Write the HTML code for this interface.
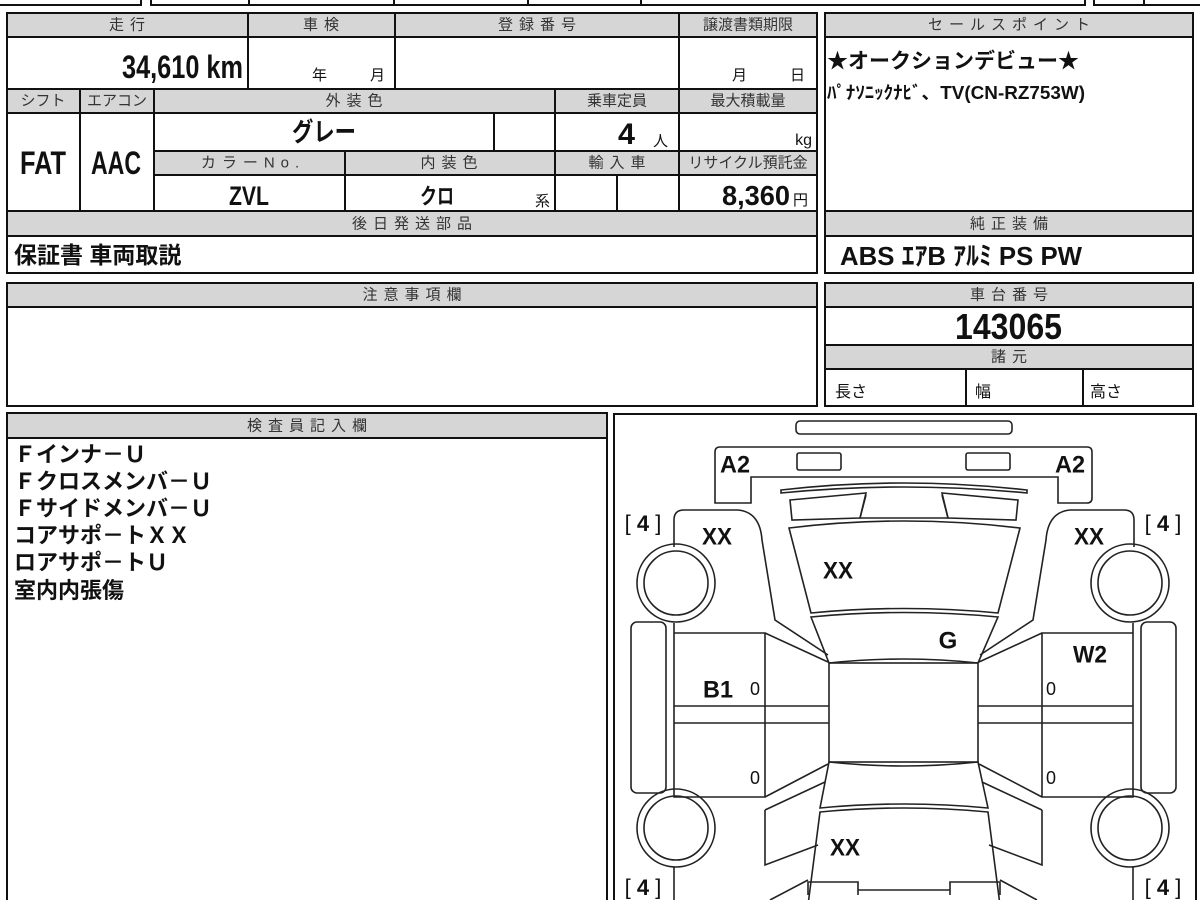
<!DOCTYPE html>
<html><head><meta charset="utf-8"><style>
html,body{margin:0;padding:0;background:#fff;width:1200px;height:900px;overflow:hidden}
svg{display:block}
text{font-family:"Liberation Sans","Noto Sans CJK JP",sans-serif;fill:#111}
.h{font-size:15px;fill:#333;text-anchor:middle;dominant-baseline:central;letter-spacing:6px}
.hs{font-size:15px;fill:#333;text-anchor:middle;dominant-baseline:central}
.bd{font-weight:bold}
.c{text-anchor:middle;dominant-baseline:central}
</style></head><body>
<svg width="1200" height="900" viewBox="0 0 1200 900" xmlns="http://www.w3.org/2000/svg">
<g fill="none" stroke="#111" stroke-width="2">
<rect x="-2" y="-10" width="143" height="15"/>
<rect x="151" y="-10" width="934" height="15"/>
<line x1="249" y1="-2" x2="249" y2="5"/><line x1="394" y1="-2" x2="394" y2="5"/><line x1="528" y1="-2" x2="528" y2="5"/><line x1="641" y1="-2" x2="641" y2="5"/>
<rect x="1094" y="-10" width="110" height="15"/><line x1="1144" y1="-2" x2="1144" y2="5"/>
</g>
<g fill="#d6d6d6">
<rect x="7" y="13" width="810" height="24"/>
<rect x="7" y="89" width="810" height="24"/>
<rect x="154" y="151" width="663" height="24"/>
<rect x="7" y="211" width="810" height="25"/>
<rect x="825" y="13" width="368" height="24"/>
<rect x="825" y="211" width="368" height="25"/>
<rect x="7" y="283" width="810" height="24"/>
<rect x="825" y="283" width="368" height="24"/>
<rect x="825" y="345" width="368" height="24"/>
<rect x="7" y="413" width="600" height="25"/>
</g>
<g fill="none" stroke="#111" stroke-width="2">
<rect x="7" y="13" width="810" height="260"/>
<line x1="7" y1="37" x2="817" y2="37"/><line x1="7" y1="89" x2="817" y2="89"/><line x1="7" y1="113" x2="817" y2="113"/>
<line x1="154" y1="151" x2="817" y2="151"/><line x1="154" y1="175" x2="817" y2="175"/>
<line x1="7" y1="211" x2="817" y2="211"/><line x1="7" y1="236" x2="817" y2="236"/>
<line x1="248" y1="13" x2="248" y2="89"/><line x1="395" y1="13" x2="395" y2="89"/><line x1="679" y1="13" x2="679" y2="89"/>
<line x1="80" y1="89" x2="80" y2="211"/><line x1="154" y1="89" x2="154" y2="211"/><line x1="555" y1="89" x2="555" y2="211"/><line x1="679" y1="89" x2="679" y2="211"/>
<line x1="494" y1="113" x2="494" y2="151"/><line x1="345" y1="151" x2="345" y2="211"/><line x1="617" y1="175" x2="617" y2="211"/>
<rect x="825" y="13" width="368" height="260"/>
<line x1="825" y1="37" x2="1193" y2="37"/><line x1="825" y1="211" x2="1193" y2="211"/><line x1="825" y1="236" x2="1193" y2="236"/>
<rect x="7" y="283" width="810" height="123"/><line x1="7" y1="307" x2="817" y2="307"/>
<rect x="825" y="283" width="368" height="123"/>
<line x1="825" y1="307" x2="1193" y2="307"/><line x1="825" y1="345" x2="1193" y2="345"/><line x1="825" y1="369" x2="1193" y2="369"/>
<line x1="966" y1="369" x2="966" y2="406"/><line x1="1083" y1="369" x2="1083" y2="406"/>
<rect x="7" y="413" width="600" height="500"/><line x1="7" y1="438" x2="607" y2="438"/>
<rect x="614" y="414" width="582" height="500"/>
</g>
<text class="h" x="130" y="25">走行</text>
<text class="h" x="324" y="25">車検</text>
<text class="h" x="540" y="25">登録番号</text>
<text class="hs" x="748" y="25">譲渡書類期限</text>
<text class="bd" x="122" y="78" font-size="32" textLength="121" lengthAdjust="spacingAndGlyphs">34,610 km</text>
<text x="312" y="80" font-size="15">年</text><text x="370" y="80" font-size="15">月</text>
<text x="732" y="80" font-size="15">月</text><text x="790" y="80" font-size="15">日</text>
<text class="hs" x="43" y="101">シフト</text>
<text class="hs" x="117" y="101">エアコン</text>
<text class="h" x="357" y="101">外装色</text>
<text class="hs" x="617" y="101">乗車定員</text>
<text class="hs" x="748" y="101">最大積載量</text>
<text class="bd" x="20" y="174" font-size="32" textLength="46" lengthAdjust="spacingAndGlyphs">FAT</text>
<text class="bd" x="91" y="174" font-size="32" textLength="50" lengthAdjust="spacingAndGlyphs">AAC</text>
<text class="bd" x="292" y="141" font-size="26" textLength="64" lengthAdjust="spacingAndGlyphs">グレー</text>
<text class="bd" x="618" y="144" font-size="30" textLength="17" lengthAdjust="spacingAndGlyphs">4</text>
<text x="653" y="146" font-size="15">人</text>
<text x="812" y="145" font-size="16" text-anchor="end">kg</text>
<text class="h" x="253" y="163" letter-spacing="9">カラーNo.</text>
<text class="h" x="452" y="163">内装色</text>
<text class="h" x="620" y="163">輸入車</text>
<text class="hs" x="748" y="163">リサイクル預託金</text>
<text class="bd" x="229" y="205" font-size="27" textLength="40" lengthAdjust="spacingAndGlyphs">ZVL</text>
<text class="bd" x="420" y="204" font-size="22" textLength="34" lengthAdjust="spacingAndGlyphs">クロ</text>
<text x="535" y="206" font-size="15">系</text>
<text class="bd" x="722" y="205" font-size="28" textLength="68" lengthAdjust="spacingAndGlyphs">8,360</text>
<text x="793" y="205" font-size="15">円</text>
<text class="h" x="415" y="224" letter-spacing="9">後日発送部品</text>
<text class="bd" x="14" y="263" font-size="23">保証書 車両取説</text>
<text class="h" x="1012" y="25" letter-spacing="12">セールスポイント</text>
<text class="bd" x="827" y="68" font-size="21">★オークションデビュー★</text>
<text class="bd" x="827" y="99" font-size="18" textLength="258" lengthAdjust="spacingAndGlyphs">ﾊﾟﾅｿﾆｯｸﾅﾋﾞ、TV(CN-RZ753W)</text>
<text class="h" x="1012" y="224" letter-spacing="9">純正装備</text>
<text class="bd" x="840" y="265" font-size="26" textLength="242" lengthAdjust="spacingAndGlyphs">ABS ｴｱB ｱﾙﾐ PS PW</text>
<text class="h" x="415" y="295" letter-spacing="12">注意事項欄</text>
<text class="h" x="1012" y="295" letter-spacing="9">車台番号</text>
<text class="bd" x="955" y="339" font-size="36" textLength="107" lengthAdjust="spacingAndGlyphs">143065</text>
<text class="h" x="1012" y="357" letter-spacing="8">諸元</text>
<text x="835" y="397" font-size="16">長さ</text><text x="975" y="397" font-size="16">幅</text><text x="1090" y="397" font-size="16">高さ</text>
<text class="h" x="310" y="426" letter-spacing="8">検査員記入欄</text>
<g font-size="22" font-weight="bold">
<text x="14" y="462">Ｆインナ－Ｕ</text>
<text x="14" y="489">Ｆクロスメンバ－Ｕ</text>
<text x="14" y="516">Ｆサイドメンバ－Ｕ</text>
<text x="14" y="543">コアサポ－トＸＸ</text>
<text x="14" y="570">ロアサポ－トＵ</text>
<text x="14" y="598">室内内張傷</text>
</g>
<g fill="none" stroke="#222" stroke-width="1.6">
<rect x="796" y="421" width="216" height="13" rx="4"/>
<path d="M715,503 L715,452 Q715,447 720,447 L1087,447 Q1092,447 1092,452 L1092,498 Q1092,503 1087,503 L1058,503 L1058,477 L751,477 L751,503 Z"/>
<rect x="797" y="453" width="44" height="17" rx="2"/>
<rect x="966" y="453" width="44" height="17" rx="2"/>
<path d="M781,490 Q904,476 1027,490 L1027,493 Q904,481 781,493 Z"/>
<path d="M790,500 L866,493 L860,518 L792,520 Z"/>
<path d="M1018,500 L942,493 L948,518 L1016,520 Z"/>
<path d="M866,495 L860,518 L948,518 L942,495"/>
<path d="M789,528 Q904,514 1020,528 L998,613 Q904,604 811,613 Z"/>
<path d="M811,617 Q904,608 998,617 L978,663 Q904,655 829,663 Z"/>
<rect x="829" y="663" width="149" height="99"/>
<path d="M829,762 Q904,770 978,762 L988,808 Q904,800 820,808 Z"/>
<path d="M820,812 Q904,804 988,812 L1000,905 L808,905 Z"/>
<path d="M808,895 L808,882 L858,882 L858,895 M1000,895 L1000,882 L950,882 L950,895 M858,890 L950,890"/>
<path d="M674,547 L674,520 Q674,510 684,510 L738,510 Q760,512 762,540 L775,620 L828,655"/>
<path d="M1134,547 L1134,520 Q1134,510 1124,510 L1070,510 Q1048,512 1046,540 L1033,620 L980,655"/>
<circle cx="676" cy="583" r="39"/><circle cx="676" cy="583" r="32"/>
<circle cx="1130" cy="583" r="39"/><circle cx="1130" cy="583" r="32"/>
<circle cx="676" cy="828" r="39"/><circle cx="676" cy="828" r="32"/>
<circle cx="1130" cy="828" r="39"/><circle cx="1130" cy="828" r="32"/>
<rect x="631" y="622" width="35" height="171" rx="6"/>
<rect x="1141" y="622" width="35" height="171" rx="6"/>
<path d="M674,623 L674,797 L765,797 L765,633 L674,633 M765,633 L828,662 M765,797 L828,764 M674,706 L829,706 M674,723 L829,723"/>
<path d="M1133,623 L1133,797 L1042,797 L1042,633 L1133,633 M1042,633 L979,662 M1042,797 L979,764 M1133,706 L978,706 M1133,723 L978,723"/>
<path d="M765,810 L765,865 L818,845 M765,810 L825,782"/>
<path d="M1042,810 L1042,865 L989,845 M1042,810 L982,782"/>
<path d="M674,867 L674,900 M808,880 L770,900"/>
<path d="M1133,867 L1133,900 M1000,880 L1037,900"/>
</g>
<g class="bd" font-size="24">
<text class="c" x="735" y="465" textLength="30" lengthAdjust="spacingAndGlyphs">A2</text><text class="c" x="1070" y="465" textLength="30" lengthAdjust="spacingAndGlyphs">A2</text>
<text class="c" x="717" y="537" textLength="30" lengthAdjust="spacingAndGlyphs">XX</text><text class="c" x="1089" y="537" textLength="30" lengthAdjust="spacingAndGlyphs">XX</text>
<text class="c" x="838" y="571" textLength="30" lengthAdjust="spacingAndGlyphs">XX</text>
<text class="c" x="948" y="641">G</text>
<text class="c" x="1090" y="655" textLength="34" lengthAdjust="spacingAndGlyphs">W2</text>
<text class="c" x="718" y="690" textLength="30" lengthAdjust="spacingAndGlyphs">B1</text>
<text class="c" x="845" y="848" textLength="30" lengthAdjust="spacingAndGlyphs">XX</text>
</g>
<g font-size="18">
<text class="c" x="755" y="689">0</text><text class="c" x="755" y="778">0</text>
<text class="c" x="1051" y="689">0</text><text class="c" x="1051" y="778">0</text>
</g>
<g font-size="22">
<text class="c" x="643" y="523">[ <tspan font-weight="bold">4</tspan> ]</text>
<text class="c" x="1163" y="523">[ <tspan font-weight="bold">4</tspan> ]</text>
<text class="c" x="643" y="887">[ <tspan font-weight="bold">4</tspan> ]</text>
<text class="c" x="1163" y="887">[ <tspan font-weight="bold">4</tspan> ]</text>
</g>
</svg>
</body></html>
